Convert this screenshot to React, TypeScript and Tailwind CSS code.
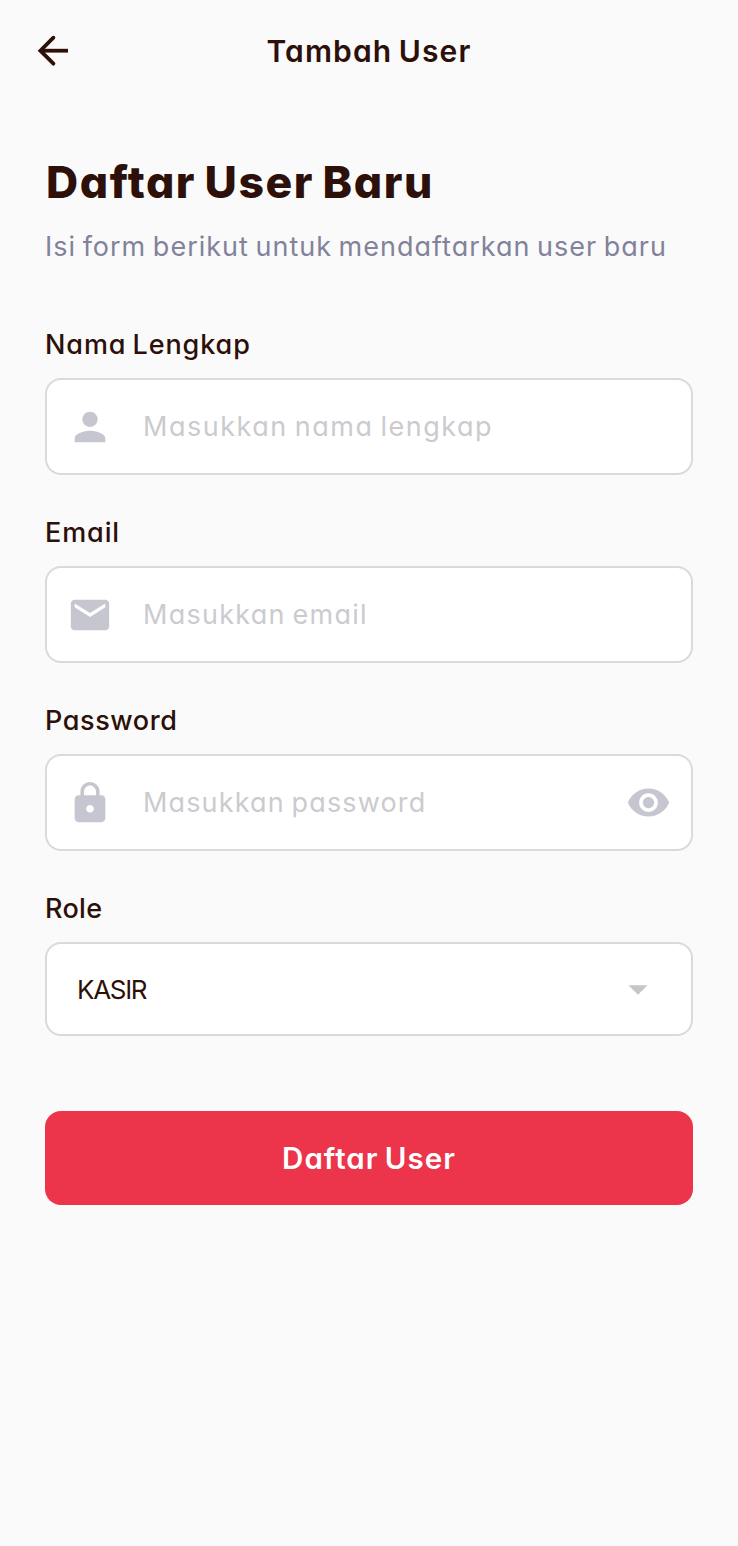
import type { ReactNode } from 'react';
import { MdArrowDropDown, MdEmail, MdLock, MdPerson, MdRemoveRedEye } from 'react-icons/md';

type FieldProps = {
  id: string;
  label: string;
  labelClass: string;
  placeholder: string;
  placeholderClass: string;
  type?: string;
  icon: ReactNode;
  action?: ReactNode;
};

function Field({ id, label, labelClass, placeholder, placeholderClass, type = 'text', icon, action }: FieldProps) {
  return (
    <div className="mb-[35px]">
      <label htmlFor={id} className={`mb-[11px] block h-[45px] text-[27px] font-medium leading-[46px] [word-spacing:-2px] ${labelClass}`}>
        {label}
      </label>
      <div className="flex h-[97px] items-center rounded-2xl border-2 border-[#d9d9de] bg-white pl-5 pr-[20.5px] text-[#c6c6d0]">
        {icon}
        <input
          id={id}
          type={type}
          placeholder={placeholder}
          className={`ml-[30px] h-full min-w-0 flex-1 bg-transparent text-[27px] outline-none [word-spacing:-2px] placeholder:text-[#cbcbcf] ${placeholderClass}`}
        />
        {action}
      </div>
    </div>
  );
}

export default function App() {
  return (
    <div className="min-h-[1546px] w-full bg-[#fafafa] font-['Inter',sans-serif] text-[#2c1009] [font-feature-settings:'cv11']">
      <header className="grid h-[102px] grid-cols-[100px_1fr_100px] items-center">
        <button type="button" aria-label="Kembali" className="ml-[30px] size-[46px]">
          <svg viewBox="0 0 46 46" className="size-[46px]" fill="none" stroke="currentColor" strokeWidth="3.8">
            <path d="M38 22.7H11" />
            <path d="M23.4 9.7L10.4 22.7l13 13" strokeLinecap="round" />
          </svg>
        </button>
        <h1 className="whitespace-nowrap pt-px text-center text-[30px] font-semibold tracking-[1.1px] [word-spacing:-2px]">Tambah User</h1>
      </header>
      <main className="px-[45px] pt-[50px]">
        <h2 className="h-[60px] whitespace-nowrap pl-px text-[44.5px] font-extrabold leading-[60px] tracking-[1.6px] [word-spacing:-3px]">Daftar User Baru</h2>
        <p className="mt-[14px] h-[40px] whitespace-nowrap text-[27px] leading-[42px] tracking-[1px] text-[#82829a] [word-spacing:-2px]">
          Isi form berikut untuk mendaftarkan user baru
        </p>
        <form className="mt-[56px]">
          <Field id="nama" label="Nama Lengkap" labelClass="tracking-[0.9px]" placeholder="Masukkan nama lengkap" placeholderClass="tracking-[1.5px]" icon={<MdPerson className="size-[46px] shrink-0" />} />
          <Field id="email" label="Email" labelClass="tracking-[0.9px]" placeholder="Masukkan email" placeholderClass="tracking-[1.25px]" icon={<MdEmail className="size-[46px] shrink-0" />} />
          <Field
            id="password"
            label="Password"
            labelClass="tracking-[0.6px]"
            placeholder="Masukkan password"
            placeholderClass="tracking-[1.15px]"
            type="password"
            icon={<MdLock className="size-[46px] shrink-0" />}
            action={
              <button type="button" aria-label="Tampilkan password">
                <MdRemoveRedEye className="size-[45px]" />
              </button>
            }
          />
          <span className="mb-[11px] block h-[45px] text-[27px] font-medium leading-[46px] tracking-[0.3px]">Role</span>
          <button type="button" className="flex h-[94px] w-full items-center justify-between rounded-2xl border-2 border-[#d9d9de] bg-white pl-[30px] pr-[30px] text-[26px] tracking-[-1.3px]">
            <span>KASIR</span>
            <MdArrowDropDown className="size-[46px] text-[#c6c6ca]" />
          </button>
          <button type="submit" className="mt-[75px] h-[94px] w-full rounded-2xl bg-[#ec344b] text-[29.5px] font-semibold tracking-[1px] text-white [word-spacing:-2px]">
            Daftar User
          </button>
        </form>
      </main>
    </div>
  );
}
